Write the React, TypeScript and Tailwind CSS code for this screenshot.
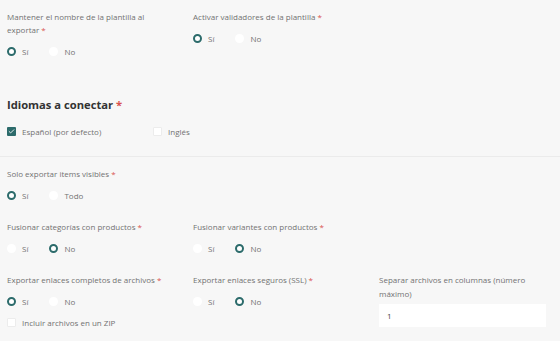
import { Check } from "lucide-react";

type Opt = { label: string; checked: boolean };

function Req() {
  return <span className="text-[#d9534f]"> *</span>;
}

function Radio({ checked }: { checked: boolean }) {
  return checked ? (
    <span className="w-[9px] h-[9px] rounded-full border-[2.5px] border-[#2c6b6b] bg-white shrink-0" />
  ) : (
    <span className="w-[9px] h-[9px] rounded-full bg-white shrink-0" />
  );
}

function Box({ checked }: { checked: boolean }) {
  return checked ? (
    <span className="w-[9px] h-[9px] rounded-[1px] bg-[#2c6b6b] flex items-center justify-center shrink-0">
      <Check className="w-[7px] h-[7px] text-white" strokeWidth={3} />
    </span>
  ) : (
    <span className="w-[9px] h-[9px] rounded-[1px] bg-white border border-[#ececec] shrink-0" />
  );
}

function RadioGroup({ options }: { options: Opt[] }) {
  return (
    <div className="flex items-center gap-[21px] h-[13px]">
      {options.map((o) => (
        <label key={o.label} className="flex items-center gap-[6px]">
          <Radio checked={o.checked} />
          <span>{o.label}</span>
        </label>
      ))}
    </div>
  );
}

function Field({ label, required = true, options }: { label: string; required?: boolean; options: Opt[] }) {
  return (
    <div className="flex flex-col">
      <div className="mb-[9px] leading-[13px]">
        {label}
        {required && <Req />}
      </div>
      <RadioGroup options={options} />
    </div>
  );
}

const si = (v: boolean): Opt[] => [
  { label: "Sí", checked: v },
  { label: "No", checked: !v },
];

export default function App() {
  return (
    <div
      className="w-[560px] h-[341px] overflow-hidden bg-[#f7f7f7] text-[#727272] text-[8px]"
      style={{ fontFamily: '"Open Sans", sans-serif' }}
    >
      <div className="px-[7px] pt-[10px]">
        <div className="grid grid-cols-[167px_167px_167px] gap-x-[19px]">
          <Field label="Mantener el nombre de la plantilla al exportar" options={si(true)} />
          <Field label="Activar validadores de la plantilla" options={si(true)} />
        </div>

        <h2 className="mt-[39px] text-[11.2px] leading-[16px] font-bold text-[#333333]">
          Idiomas a conectar<span className="text-[#d9534f]"> *</span>
        </h2>

        <div className="mt-[12px] flex items-center h-[13px]">
          <label className="flex items-center gap-[6px] w-[146px]">
            <Box checked />
            <span>Español (por defecto)</span>
          </label>
          <label className="flex items-center gap-[6px]">
            <Box checked={false} />
            <span>Inglés</span>
          </label>
        </div>
      </div>

      <div className="mt-[18px] border-t border-[#ebebeb]" />

      <div className="px-[7px] pt-[10px] flex flex-col gap-[18px]">
        <Field
          label="Solo exportar items visibles"
          options={[
            { label: "Sí", checked: true },
            { label: "Todo", checked: false },
          ]}
        />
        <div className="grid grid-cols-[167px_167px_167px] gap-x-[19px]">
          <Field label="Fusionar categorías con productos" options={si(false)} />
          <Field label="Fusionar variantes con productos" options={si(false)} />
        </div>
        <div className="grid grid-cols-[167px_167px_167px] gap-x-[19px]">
          <div className="flex flex-col">
            <Field label="Exportar enlaces completos de archivos" options={si(true)} />
            <label className="mt-[8px] flex items-center gap-[6px] h-[13px]">
              <Box checked={false} />
              <span>Incluir archivos en un ZIP</span>
            </label>
          </div>
          <Field label="Exportar enlaces seguros (SSL)" options={si(false)} />
          <div className="flex flex-col">
            <div className="leading-[14px] mb-[3px]">Separar archivos en columnas (número máximo)</div>
            <div className="h-[23px] bg-white flex items-center px-[8px] text-[#444444]">1</div>
          </div>
        </div>
      </div>
    </div>
  );
}
